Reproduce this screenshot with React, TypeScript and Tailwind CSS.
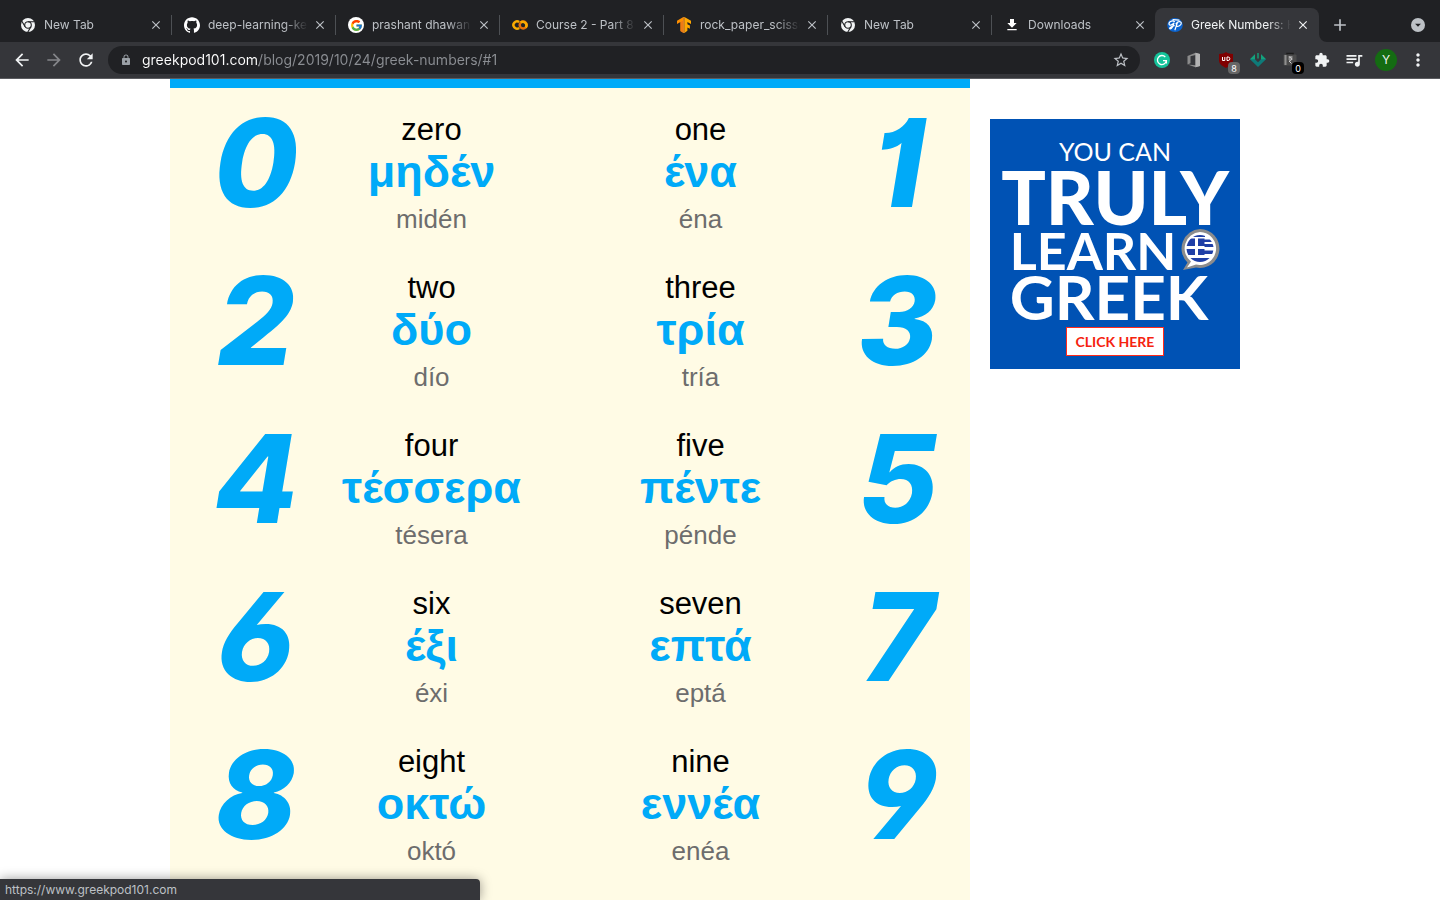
import type { ReactNode } from "react";
import {
  MdAdd,
  MdArrowBack,
  MdArrowDropDown,
  MdArrowForward,
  MdClose,
  MdExtension,
  MdFileDownload,
  MdLock,
  MdMoreVert,
  MdQueueMusic,
  MdRefresh,
  MdStarBorder,
} from "react-icons/md";
import { FcGoogle } from "react-icons/fc";
import { SiGithub } from "react-icons/si";

function ChromeIcon() {
  return (
    <svg viewBox="0 0 16 16" className="size-4" fill="none">
      <circle cx="8" cy="8" r="7" fill="#f1f3f4" />
      <circle cx="8" cy="8" r="3.3" stroke="#202124" strokeWidth="1.1" />
      <path d="M8 4.700h6.400M5.100 9.700 1.900 4.200M10.900 9.700 7.700 15.200" stroke="#202124" strokeWidth="1.100" />
    </svg>
  );
}

function ColabIcon() {
  return (
    <svg viewBox="0 0 16 16" className="size-4" fill="none" strokeWidth="2.5">
      <path d="M7.2 5.1A3.6 3.6 0 1 0 7.2 10.9" stroke="#f9ab00" />
      <circle cx="11.2" cy="8" r="3.5" stroke="#e8710a" />
      <path d="M8.7 5.6A3.5 3.5 0 0 1 13.7 10.4" stroke="#f9ab00" />
    </svg>
  );
}

function TensorFlowIcon() {
  return (
    <svg viewBox="0 0 16 16" className="size-4">
      <path d="M7.4 0 1 3.7v3.4l3.5-2v8.7l2.9 1.7z" fill="#ff8f00" />
      <path d="M4.500 5.100 7.400 3.400V16l-2.900-1.700z" fill="#ef7a14" />
      <path d="M8.4 0 15 3.7v3.4l-3.6-2v2.1l2.5 1.4v3.2l-2.5-1.4v3.3L8.4 16z" fill="#ffa800" />
      <path d="M7.2 0h1.4v16H7.2z" fill="#ed8e24" />
    </svg>
  );
}

function GreekPodIcon() {
  return (
    <svg viewBox="0 0 16 16" className="size-4" fill="none">
      <ellipse cx="8" cy="8" rx="7.800" ry="7" fill="#0b63ce" />
      <path
        d="M7.500 4.600C5 2.600 1.200 5.300 2.200 7.400c.8 1.600 3.600.2 4.800-1.600C6.300 8.800 4.600 12.300 3 11.800c-1.200-.4.600-2 4.200-3.200M10.500 5.200 8 12.800M9 6.800c1.500-2.500 5.200-3 5.300-.7.100 2.100-3.300 3.900-5.200 3M12 3.200 6 2.600"
        stroke="#fff"
        strokeWidth="1.200"
        strokeLinecap="round"
      />
    </svg>
  );
}

function GrammarlyIcon() {
  return (
    <svg viewBox="0 0 16 16" className="size-4" fill="none">
      <circle cx="8" cy="8" r="8" fill="#15c39a" />
      <path d="M11.300 5A4.500 4.500 0 1 0 12.300 9.200" stroke="#fff" strokeWidth="1.300" />
      <path d="M9 8.600h3.400v3" stroke="#fff" strokeWidth="1.300" />
    </svg>
  );
}

function OfficeIcon() {
  return (
    <svg viewBox="0 0 16 16" className="size-4">
      <path d="M1.500 4 9.500.8l4.500 1.300v11.800L9.500 15.300 1.700 12.400l7.800.9V3L4.500 4.200v7L1.500 12.400z" fill="#8b8b8b" />
      <path d="M9.500.8 14 2.100v11.800l-4.500 1.400z" fill="#b3b3b3" />
    </svg>
  );
}

function ShieldIcon() {
  return (
    <svg viewBox="0 0 16 16" className="size-4" fill="none">
      <path d="M8 0c2 1.400 4 1.900 7 1.900v6.600c0 3.500-3.500 5.700-7 7.500-3.500-1.800-7-4-7-7.500V1.900C4 1.900 6 1.400 8 0z" fill="#800000" />
      <path d="M4.500 5v3.500h2.300V5M9 5v3.500h1.100a1.600 1.600 0 0 0 0-3.500z" stroke="#fff" strokeWidth="1" />
    </svg>
  );
}

function ArrowGemIcon() {
  return (
    <svg viewBox="0 0 16 16" className="size-4">
      <path d="M0 7.300 5 2.300v5L8 10.300l3-3v-5l5 5L8 15z" fill="#0e7a78" />
      <path d="M0 7.300 5 2.300v5zM11 2.300l5 5h-5z" fill="#15a37c" />
      <path d="M7.300 1h1.400v5.600H7.300z" fill="#15a37c" />
    </svg>
  );
}

function PriceTagIcon() {
  return (
    <svg viewBox="0 0 16 16" className="size-4" fill="none">
      <path d="M5 3V1.500h6V3" stroke="#1c1c1c" strokeWidth="1.500" />
      <rect x="1.500" y="2.500" width="13" height="11" rx="1" fill="#4a4a4a" />
      <rect x="2.500" y="3" width="2" height="10" fill="#8f8f8f" />
      <path d="M6.500 5h4M6.500 7h4M7 5c3.500 0 3.500 4 0 4l2.500 2.500" stroke="#d0d0d0" strokeWidth="1" />
    </svg>
  );
}

function GreekFlagBubble() {
  return (
    <svg viewBox="0 0 40 42" className="h-[42px] w-10" aria-hidden="true">
      <path d="M20 0a19.500 19.500 0 1 1-4 38.600L3 41l4.500-7.500A19.500 19.500 0 0 1 20 0z" fill="#8c8c8c" />
      <path d="M20 3a16.500 16.500 0 1 1-4 32.600L7 38.500l4-6A16.500 16.500 0 0 1 20 3z" fill="#fff" />
      <clipPath id="flag-disc">
        <circle cx="20" cy="19.500" r="13.500" />
      </clipPath>
      <g clipPath="url(#flag-disc)">
        <rect x="6" y="5" width="28" height="29" fill="#fff" />
        <path
          d="M13 6h12v2H13zM6 9.500h9v7.500H6zM18 9.500h6.500v7.500H18zM24.500 10.500h10v2.500h-10zM24.500 15h10v3h-10zM6 20h9v6H6zM18 20h6.500v6H18zM24.500 21.500h10V25h-10zM8 29h24v4H8z"
          fill="#1f3fa6"
        />
      </g>
    </svg>
  );
}

const tabs: { title: string; icon: ReactNode; active?: boolean }[] = [
  { title: "New Tab", icon: <ChromeIcon /> },
  { title: "deep-learning-keras", icon: <SiGithub className="size-4 text-white" /> },
  {
    title: "prashant dhawan",
    icon: (
      <span className="flex size-4 items-center justify-center rounded-full bg-white">
        <FcGoogle className="size-[13px]" />
      </span>
    ),
  },
  { title: "Course 2 - Part 8", icon: <ColabIcon /> },
  { title: "rock_paper_scissors", icon: <TensorFlowIcon /> },
  { title: "New Tab", icon: <ChromeIcon /> },
  { title: "Downloads", icon: <MdFileDownload className="size-4 text-white" /> },
  { title: "Greek Numbers: How", icon: <GreekPodIcon />, active: true },
];

function TabStrip() {
  return (
    <div className="flex h-[42px] items-end bg-[#202124] pl-[7px] pr-3">
      {tabs.map((tab, i) => (
        <div
          key={i}
          className={
            tab.active
              ? "relative flex h-[34px] w-[164px] min-w-0 items-center rounded-t-lg bg-[#35363a] pl-3 pr-2 text-[#f1f3f4]"
              : "relative flex h-[34px] w-[164px] min-w-0 items-center pl-[13px] pr-[7px] text-[#bdc1c6]"
          }
        >
          <span className="flex size-4 shrink-0 items-center justify-center">{tab.icon}</span>
          <span className="ml-2 min-w-0 flex-1 overflow-hidden whitespace-nowrap text-xs [mask-image:linear-gradient(to_right,black_76px,transparent_100px)]">
            {tab.title}
          </span>
          <button aria-label="Close tab" className="ml-1 flex size-4 shrink-0 items-center justify-center">
            <MdClose className="size-[14px]" />
          </button>
          {!tab.active && i < tabs.length - 2 && (
            <span className="absolute -right-px top-[7px] h-5 w-px bg-[#4d5054]" />
          )}
          {tab.active && (
            <>
              <svg viewBox="0 0 8 8" className="absolute -left-2 bottom-0 size-2" fill="#35363a">
                <path d="M8 0v8H0a8 8 0 0 0 8-8z" />
              </svg>
              <svg viewBox="0 0 8 8" className="absolute -right-2 bottom-0 size-2" fill="#35363a">
                <path d="M0 0v8h8a8 8 0 0 1-8-8z" />
              </svg>
            </>
          )}
        </div>
      ))}
      <button aria-label="New tab" className="ml-[11px] flex h-[34px] w-5 items-center justify-center text-[#bdc1c6]">
        <MdAdd className="size-5" />
      </button>
      <div className="ml-auto flex h-[34px] w-5 items-center justify-center">
        <button
          aria-label="Search tabs"
          className="flex size-[14px] items-center justify-center rounded-full bg-[#bdc1c6] text-[#202124]"
        >
          <MdArrowDropDown className="size-4" />
        </button>
      </div>
    </div>
  );
}

function ToolButton({ label, children }: { label: string; children: ReactNode }) {
  return (
    <button aria-label={label} className="relative flex h-8 w-8 shrink-0 items-center justify-center text-[#f1f3f4]">
      {children}
    </button>
  );
}

function Toolbar() {
  return (
    <div className="flex h-[37px] items-center border-b border-[#5b5c60] bg-[#35363a] px-[6px]">
      <ToolButton label="Back">
        <MdArrowBack className="size-5" />
      </ToolButton>
      <ToolButton label="Forward">
        <MdArrowForward className="size-5 text-[#85868a]" />
      </ToolButton>
      <ToolButton label="Reload">
        <MdRefresh className="size-5" />
      </ToolButton>
      <div className="mx-[6px] flex h-7 flex-1 items-center rounded-full bg-[#202124] pl-3 pr-[10px]">
        <MdLock className="size-3 shrink-0 text-[#9aa0a6]" />
        <input
          aria-label="Address"
          type="text"
          defaultValue="greekpod101.com/blog/2019/10/24/greek-numbers/#1"
          className="ml-[10px] min-w-0 flex-1 bg-[linear-gradient(to_right,#ffffff_117px,#8b8e93_117px)] bg-clip-text text-sm text-transparent outline-none"
        />
        <button aria-label="Bookmark this tab" className="text-[#bdc1c6]">
          <MdStarBorder className="size-[18px]" />
        </button>
      </div>
      <ToolButton label="Grammarly">
        <GrammarlyIcon />
      </ToolButton>
      <ToolButton label="Office">
        <OfficeIcon />
      </ToolButton>
      <ToolButton label="Ad blocker">
        <ShieldIcon />
        <span className="absolute bottom-[2px] right-[2px] flex h-3 w-3 items-center justify-center rounded-sm bg-[#666666] text-[9px] leading-none text-white">
          8
        </span>
      </ToolButton>
      <ToolButton label="Downloader">
        <ArrowGemIcon />
      </ToolButton>
      <ToolButton label="Price tracker">
        <PriceTagIcon />
        <span className="absolute bottom-[2px] right-[2px] flex h-3 w-3 items-center justify-center rounded-sm bg-black text-[9px] leading-none text-white">
          0
        </span>
      </ToolButton>
      <ToolButton label="Extensions">
        <MdExtension className="size-4" />
      </ToolButton>
      <ToolButton label="Media controls">
        <MdQueueMusic className="size-5" />
      </ToolButton>
      <ToolButton label="Profile">
        <span className="flex size-[22px] items-center justify-center rounded-full bg-[#146c12] text-xs">Y</span>
      </ToolButton>
      <ToolButton label="Menu">
        <MdMoreVert className="size-5" />
      </ToolButton>
    </div>
  );
}

const numbers = [
  { digit: "0", word: "zero", greek: "μηδέν", roman: "midén" },
  { digit: "1", word: "one", greek: "ένα", roman: "éna" },
  { digit: "2", word: "two", greek: "δύο", roman: "dío" },
  { digit: "3", word: "three", greek: "τρία", roman: "tría" },
  { digit: "4", word: "four", greek: "τέσσερα", roman: "tésera" },
  { digit: "5", word: "five", greek: "πέντε", roman: "pénde" },
  { digit: "6", word: "six", greek: "έξι", roman: "éxi" },
  { digit: "7", word: "seven", greek: "επτά", roman: "eptá" },
  { digit: "8", word: "eight", greek: "οκτώ", roman: "októ" },
  { digit: "9", word: "nine", greek: "εννέα", roman: "enéa" },
];

type NumberEntry = (typeof numbers)[number];

function Digit({ value }: { value: string }) {
  return (
    <div className="text-center font-['Inter',sans-serif] text-[122px] font-extrabold italic leading-[104px] text-[#00aaf8] [font-feature-settings:'cv01','cv03','cv04']">
      {value}
    </div>
  );
}

function Translation({ entry }: { entry: NumberEntry }) {
  return (
    <div className="whitespace-nowrap text-center">
      <div className="text-[31px] leading-[38px] text-black">{entry.word}</div>
      <div className="text-[45px] font-bold leading-[46px] text-[#00aaf8]">{entry.greek}</div>
      <div className="text-[26px] leading-[48px] text-[#6d6d6d]">{entry.roman}</div>
    </div>
  );
}

function NumberChart() {
  const rows = numbers.filter((_, i) => i % 2 === 0).map((left, i) => [left, numbers[i * 2 + 1]]);
  return (
    <article className="w-[800px] min-w-0 border-t-[9px] border-[#00aaf8] bg-[#fffbe5] pb-16 pt-[23px] font-['Liberation_Sans',Arial,sans-serif]">
      <div className="flex flex-col gap-[26px]">
        {rows.map(([left, right]) => (
          <div key={left.digit} className="grid grid-cols-[172fr_179fr_309fr_140fr]">
            <Digit value={left.digit} />
            <Translation entry={left} />
            <div className="pl-[50px]">
              <Translation entry={right} />
            </div>
            <div className="pr-1">
              <Digit value={right.digit} />
            </div>
          </div>
        ))}
      </div>
    </article>
  );
}

function AdBanner() {
  return (
    <aside className="mt-10 flex h-[250px] w-[250px] shrink-0 flex-col items-center whitespace-nowrap bg-[#0052b4] pt-4 font-['Lato',sans-serif] text-white">
      <div className="text-[25px] leading-8">YOU CAN</div>
      <div className="text-[74px] font-black leading-[60px]">TRULY</div>
      <div className="flex items-center gap-1">
        <span className="text-[52px] font-bold leading-[46px]">LEARN</span>
        <GreekFlagBubble />
      </div>
      <div className="pr-3 text-[62px] font-bold leading-[46px]">GREEK</div>
      <a
        href="#click"
        className="mt-2 flex h-[29px] w-[98px] items-center justify-center border border-[#ff2a1a] bg-white text-sm font-bold text-[#f5230f]"
      >
        CLICK HERE
      </a>
    </aside>
  );
}

export default function App() {
  return (
    <div className="relative flex h-screen flex-col overflow-hidden bg-white font-['Inter',sans-serif]">
      <header className="shrink-0">
        <TabStrip />
        <Toolbar />
      </header>
      <main className="min-h-0 flex-1 overflow-hidden">
        <div className="mx-auto flex max-w-[1100px] items-start gap-5">
          <NumberChart />
          <AdBanner />
        </div>
      </main>
      <div className="absolute bottom-0 left-0 flex h-[21px] w-1/3 items-center rounded-tr bg-[#35363a] pl-[5px] text-xs text-[#bdc1c6] shadow-[0_0_12px_rgba(0,0,0,0.4)]">
        https://www.greekpod101.com
      </div>
    </div>
  );
}
